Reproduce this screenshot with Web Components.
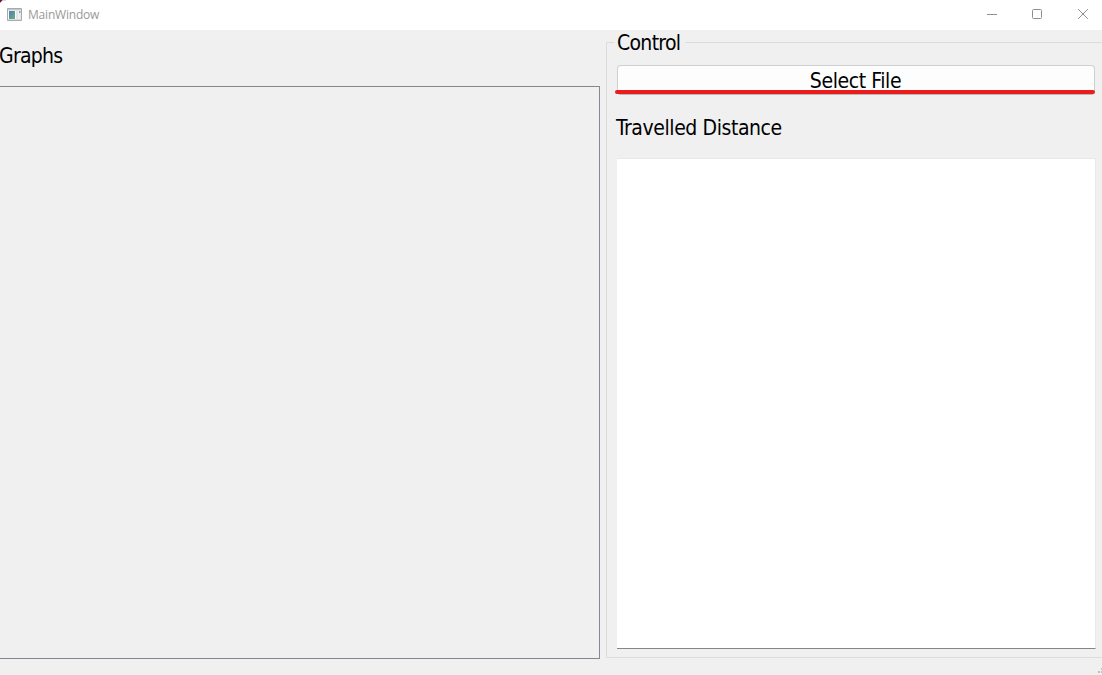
<!DOCTYPE html>
<html lang="en"><head><meta charset="utf-8"><title>MainWindow</title>
<style>html,body{margin:0;height:100%;overflow:hidden;background:#f0f0f0}</style></head>
<body>
<main-window>
 <title-bar slot="title">MainWindow</title-bar>
 <graph-panel slot="left">Graphs</graph-panel>
 <control-group slot="right" legend="Control">
  <file-button>Select File</file-button>
  <distance-view>Travelled Distance</distance-view>
 </control-group>
</main-window>
<script>
const define=(name,html)=>customElements.define(name,class extends HTMLElement{
 constructor(){super();this.attachShadow({mode:'open'}).innerHTML=html;
  const l=this.shadowRoot.querySelector('.legend');if(l)l.textContent=this.getAttribute('legend');}
});
define('size-grip',`<style>:host{display:block;width:5px;height:7px}svg{display:block}</style>
<svg width="5" height="7" fill="#bfbfbf" shape-rendering="crispEdges"><path d="M4 0h1v2H4zM1 3h2v2H1zM4 3h1v2H4z"/></svg>`);
define('main-window',`<style>
:host{display:grid;grid-template:30px 1fr / 600px 1fr;column-gap:6px;width:1102px;height:675px;background:#f0f0f0;color:#000;font:21px/26px "DejaVu Sans Condensed","DejaVu Sans",sans-serif;font-stretch:condensed;overflow:hidden;position:relative}
slot[name=title]::slotted(*){grid-column:1/3}
size-grip{position:absolute;right:0;bottom:0}
</style><slot name="title"></slot><slot name="left"></slot><slot name="right"></slot><size-grip></size-grip>`);
define('title-bar',`<style>
:host{display:flex;align-items:center;height:30px;background:#fff;color:#999;font:12px/16px "Open Sans","Noto Sans",sans-serif;box-sizing:border-box;padding-left:7px}
.t{margin-left:6px;flex:1;letter-spacing:-.2px}svg{display:block;flex:none}
.app{margin-top:-2px}.corner{position:absolute;left:0;top:0}
</style>
<svg class="corner" width="6" height="3" shape-rendering="crispEdges"><path fill="#70182b" d="M0 0h2v1H1v1H0z"/><path fill="#cfaab2" d="M2 0h1v1H2zM1 1h1v1H1zM0 2h1v1H0z"/><path fill="#ddd" d="M3 0h3v1H3z"/></svg>
<svg class="app" width="15" height="13" viewBox="0 0 15 13"><defs><linearGradient id="g" x2="1" y2="1"><stop stop-color="#527eb0"/><stop offset="1" stop-color="#64b185"/></linearGradient></defs>
<path fill="#fff" stroke="#a5aaaf" d="M.5.5h14v12H.5z"/><path fill="#c4c8cc" d="M1 1h13v1.5H1z"/><path fill="url(#g)" d="M2 3h6v8H2z"/><path fill="#e4e4e8" d="M9 3h2.5v8H9z"/><path fill="#e9eaec" d="M12 3h2v8h-2z"/><path fill="#76b797" d="M12 3h1.5v2H12z"/><path fill="#dadcde" d="M1 11h13v1H1z"/></svg>
<span class="t"><slot></slot></span>
<svg width="120" height="30" fill="none" stroke="#8e8e8e"><path d="M5 14.5h10"/><rect x="50.5" y="9.5" width="9" height="9" rx="1"/><path d="M96.2 9.2l9.6 9.6M105.8 9.2l-9.6 9.6"/></svg>`);
define('graph-panel',`<style>
:host{display:flex;flex-direction:column;height:645px;box-sizing:border-box;padding:13px 0 16px}
.l{height:43px;margin-left:0;text-indent:-1px;letter-spacing:-.75px}.f{flex:1;border:1px solid #828790;border-left:0;border-right-color:#8b8792}
</style><div class="l"><slot></slot></div><div class="f"></div>`);
define('control-group',`<style>
:host{display:block;height:645px;box-sizing:border-box;padding:0 0 17px}
fieldset{margin:0;padding:10px 7px 9px 10px;min-width:0;height:628px;box-sizing:border-box;border:1px solid #dcdcdc;border-right:0;border-radius:1px;display:flex;flex-direction:column}
legend{padding:0 5px 0 3px;margin-left:-3px;height:25px;line-height:27px;letter-spacing:-.7px}
</style><fieldset><legend class="legend"></legend><slot></slot></fieldset>`);
define('file-button',`<style>
:host{display:block;position:relative;height:30px;flex:none}
button{display:block;width:100%;height:30px;box-sizing:border-box;padding:2px 1px 0 0;background:#fdfdfd;border:1px solid #d0d0d0;border-bottom-color:#b8b8b8;border-radius:4px;font:inherit;color:inherit;line-height:26px;letter-spacing:-.4px}
.mark{position:absolute;left:-2.5px;right:.5px;top:25px;height:4px;border-radius:2px;background:#ed1c1c}
</style><button><slot></slot></button><div class="mark"></div>`);
define('distance-view',`<style>
:host{display:flex;flex-direction:column;height:554px;flex:none}
.l{height:43px;padding-top:20px;margin-left:-1px;letter-spacing:-.42px}
.v{flex:1;margin-right:-1px;background:#fff;border:1px solid #e8e8e8;border-left:0;border-bottom-color:#868686}
</style><div class="l"><slot></slot></div><div class="v"></div>`);
</script></body></html>
